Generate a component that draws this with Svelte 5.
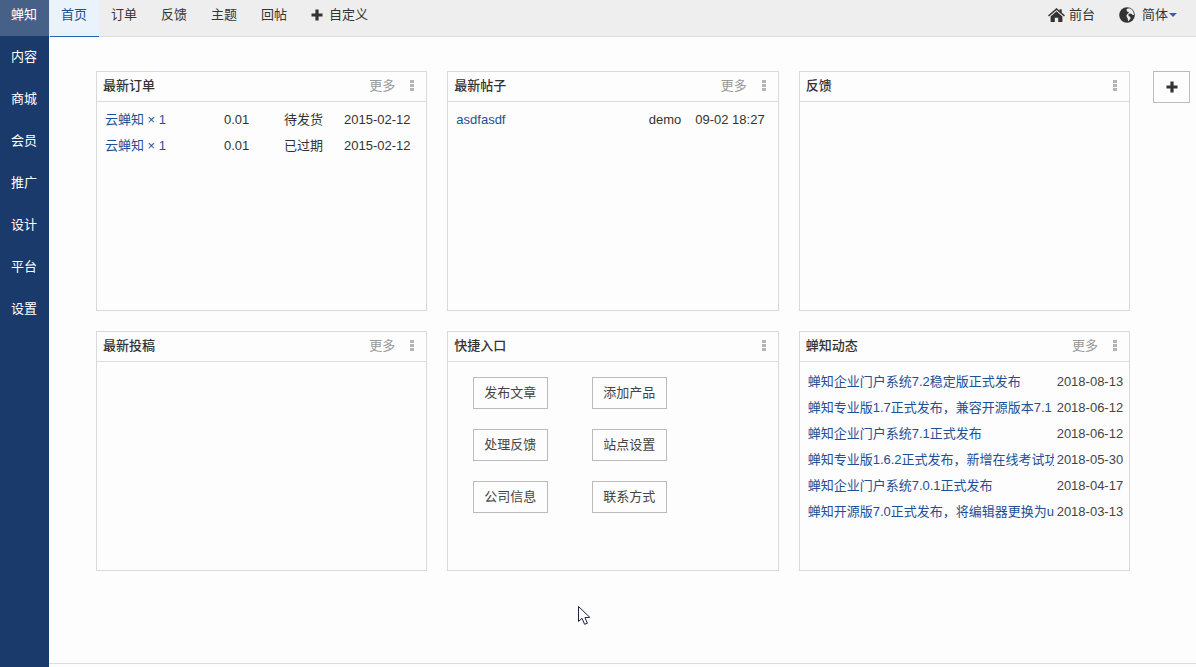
<script>
  const nav = ['内容','商城','会员','推广','设计','平台','设置'];
  const tabs = ['订单','反馈','主题','回帖'];
  const news = [
    ['蝉知企业门户系统7.2稳定版正式发布','2018-08-13'],
    ['蝉知专业版1.7正式发布，兼容开源版本7.1','2018-06-12'],
    ['蝉知企业门户系统7.1正式发布','2018-06-12'],
    ['蝉知专业版1.6.2正式发布，新增在线考试功能','2018-05-30'],
    ['蝉知企业门户系统7.0.1正式发布','2018-04-17'],
    ['蝉知开源版7.0正式发布，将编辑器更换为ueditor','2018-03-13']
  ];
  const shortcuts = ['发布文章','添加产品','处理反馈','站点设置','公司信息','联系方式'];
</script>

{#snippet dots()}
  <span class="dots"><i></i><i></i><i></i></span>
{/snippet}

{#snippet head(title, more)}
  <header class="phead">
    <strong>{title}</strong>
    {#if more}<span class="more">更多</span>{/if}
    {@render dots()}
  </header>
{/snippet}

<div class="app">
  <aside class="side">
    <div class="brand">蝉知</div>
    {#each nav as n}<div class="sitem">{n}</div>{/each}
  </aside>
  <div class="content">
    <nav class="top">
      <a class="tab active">首页</a>
      {#each tabs as t}<a class="tab">{t}</a>{/each}
      <a class="custom">
        <svg class="plus" viewBox="0 0 12 12"><path d="M4.4 0.5h3.2v3.9h3.9v3.2H7.6v3.9H4.4V7.6H0.5V4.4h3.9z"/></svg>
        自定义
      </a>
      <span class="spacer"></span>
      <a class="tool">
        <svg class="home" viewBox="0 0 17 14"><path d="M8.5 0 L11.6 2.7 V1.2 H13.7 V4.5 L17 7.4 L16 8.5 L8.5 2 L1 8.5 L0 7.4 Z M8.5 3.3 L14.4 8.4 V14 H10.2 V9.8 H6.8 V14 H2.6 V8.4 Z"/></svg>
        前台
      </a>
      <a class="tool lang">
        <svg class="globe" viewBox="0 0 16 16"><circle cx="8" cy="8" r="7.8"/><path fill="#eee" d="M7.5 2 L10.5 1.2 L13 2.8 L14.4 5 L15 8 L13.6 8 L12.4 6.8 L10.4 6.6 L9.2 7.8 L9.8 9.2 L11.2 9.8 L11.6 11.6 L10 13.6 L9 14.2 L8.8 11.8 L7.8 10 L7.4 8.4 L8.4 7 L10 5.6 L9 4.6 L8 4.8 Z"/></svg>
        简体<span class="caret"></span>
      </a>
    </nav>
    <main class="main">
      <div class="grid">
        <section class="panel">
          {@render head('最新订单', true)}
          <div class="orders">
            <div class="order"><a>云蝉知 × 1</a><span>0.01</span><span>待发货</span><span>2015-02-12</span></div>
            <div class="order"><a>云蝉知 × 1</a><span>0.01</span><span>已过期</span><span>2015-02-12</span></div>
          </div>
        </section>
        <section class="panel">
          {@render head('最新帖子', true)}
          <div class="thread"><a>asdfasdf</a><span class="author">demo</span><span>09-02 18:27</span></div>
        </section>
        <section class="panel">{@render head('反馈', false)}</section>
        <section class="panel">{@render head('最新投稿', true)}</section>
        <section class="panel">
          {@render head('快捷入口', false)}
          <div class="shortcuts">
            {#each shortcuts as s}<a class="sbtn">{s}</a>{/each}
          </div>
        </section>
        <section class="panel">
          {@render head('蝉知动态', true)}
          <div class="news">
            {#each news as [t, d]}
              <div class="nrow"><a class="ntitle">{t}</a><span class="ndate">{d}</span></div>
            {/each}
          </div>
        </section>
      </div>
      <button class="add" aria-label="添加">
        <svg viewBox="0 0 12 12"><path d="M4.4 0.5h3.2v3.9h3.9v3.2H7.6v3.9H4.4V7.6H0.5V4.4h3.9z"/></svg>
      </button>
    </main>
    <footer class="foot"></footer>
  </div>
  <svg class="cursor" viewBox="0 0 13 20" width="13" height="20"><path d="M0.5 0.5 V15.5 L4 12.3 L6.6 18.3 L9.4 17.2 L6.9 11.6 L11.8 11.3 Z" fill="#fff" stroke="#1c2340" stroke-width="1"/></svg>
</div>

<style>
  :global(body) {
    margin: 0;
    background: #fdfdfd;
    font-family: "Liberation Sans", "Noto Sans CJK SC", sans-serif;
    font-size: 13px;
    color: #333;
  }
  .app { position: relative; display: flex; width: 1196px; height: 667px; overflow: hidden; }
  .side { width: 49px; flex: none; background: #1a3a6b; color: #fff; }
  .brand { height: 36px; line-height: 30px; text-align: center; background: #476087; padding-right: 1px; box-sizing: border-box; }
  .sitem { height: 42px; line-height: 40px; text-align: center; padding-right: 1px; box-sizing: border-box; }
  .brand + .sitem { margin-top: 1px; }
  .content { flex: 1; display: flex; flex-direction: column; min-width: 0; }
  .top {
    height: 36px; flex: none; display: flex; align-items: stretch;
    background: #eee; border-bottom: 1px solid #ddd; line-height: 30px;
  }
  .tab { width: 49px; box-sizing: border-box; margin-left: 1px; padding-right: 1px; text-align: center; color: #353535; }
  .tab.active { background: #eaf2fb; color: #1a4f9c; border-bottom: 1px solid #2a62b8; height: 37px; }
  .custom { margin-left: 12px; display: flex; align-items: center; height: 30px; gap: 6px; }
  .plus { width: 12px; height: 12px; fill: #333; }
  .spacer { flex: 1; }
  .tool { display: flex; align-items: center; height: 30px; gap: 4px; }
  .home { width: 17px; height: 14px; fill: #333; }
  .lang { margin-left: 24px; margin-right: 19px; gap: 7px; }
  .globe { width: 16px; height: 16px; fill: #333; }
  .caret {
    display: inline-block; width: 0; height: 0; margin-left: -6px;
    border: 4px solid transparent; border-top-color: #2a62b8; border-bottom: 0;
  }
  .main { flex: 1; display: flex; align-items: flex-start; padding: 34px 6px 0 47px; min-height: 0; }
  .grid { flex: none; width: 1034px; display: grid; grid-template-columns: repeat(3, 1fr); grid-auto-rows: 240px; gap: 20px; }
  .panel { box-sizing: border-box; border: 1px solid #d9d9d9; background: #fdfdfd; min-width: 0; }
  .phead {
    height: 30px; box-sizing: border-box; border-bottom: 1px solid #ddd;
    display: flex; align-items: center; padding: 0 12px 4px 6px;
  }
  .phead strong { flex: 1; font-weight: 500; color: #333; font-size: 13px; }
  .more { color: #999; margin-right: 15px; }
  .dots { display: flex; flex-direction: column; gap: 1px; width: 4px; margin-top: 2px; }
  .dots i { width: 4px; height: 3px; background: #b4b4b4; display: block; }
  a { color: inherit; }
  .orders { padding-top: 5px; }
  .order { display: grid; grid-template-columns: 119px 60px 60px 1fr; height: 26px; line-height: 26px; padding-left: 8px; }
  .order a, .thread a, .ntitle { color: #1f4f96; }
  .thread { display: flex; height: 26px; line-height: 26px; padding: 5px 13px 0 8px; }
  .thread a { flex: 1; }
  .author { margin-right: 14px; }
  .shortcuts {
    display: grid; grid-template-columns: 75px 75px; column-gap: 44px; row-gap: 20px;
    padding: 15px 0 0 25px;
  }
  .sbtn {
    box-sizing: border-box; height: 32px; line-height: 29px; text-align: center; padding-right: 1px;
    border: 1px solid #bbb; color: #444;
  }
  .news { padding: 7px 0 0 8px; }
  .nrow { display: flex; height: 26px; line-height: 25px; }
  .ntitle { width: 246px; flex: none; white-space: nowrap; overflow: hidden; }
  .ndate { margin-left: 3px; white-space: nowrap; color: #444; }
  .add {
    box-sizing: border-box; width: 37px; height: 32px; margin-left: 23px; padding: 0;
    background: #fdfdfd; border: 1px solid #bbb; display: flex; align-items: center; justify-content: center;
  }
  .add svg { width: 12px; height: 12px; fill: #333; }
  .foot { height: 3px; flex: none; border-top: 1px solid #ddd; }
  .cursor { position: absolute; left: 578px; top: 606px; }
</style>
